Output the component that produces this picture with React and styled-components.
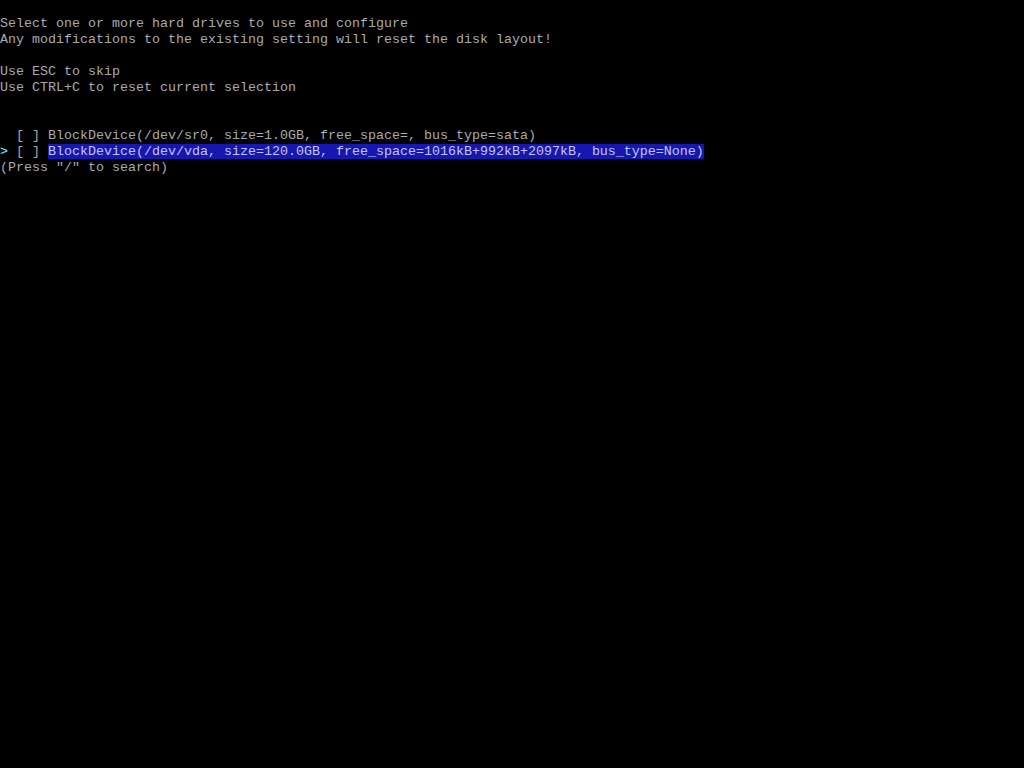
import React from "react";
import styled, { createGlobalStyle } from "styled-components";

const Global = createGlobalStyle`
  html, body { margin: 0; padding: 0; background: #000; }
  #root { width: 1024px; height: 768px; }
`;

const Screen = styled.div`
  width: 1024px;
  height: 768px;
  background: #000;
  color: #aaaaaa;
  font-family: "Liberation Mono", "DejaVu Sans Mono", monospace;
  font-size: 13.333px;
  line-height: 16px;
  overflow: hidden;
  display: flex;
  flex-direction: column;
`;

const Line = styled.div`
  height: 16px;
  white-space: pre;
`;

const Cursor = styled.span`
  color: #55ffff;
`;

const Selected = styled.span`
  background: #1616b0;
  color: #c4c4ee;
`;

const blank = <Line> </Line>;

export default function App() {
  return (
    <Screen>
      <Global />
      <Line> </Line>
      <Line>Select one or more hard drives to use and configure</Line>
      <Line>Any modifications to the existing setting will reset the disk layout!</Line>
      <Line> </Line>
      <Line>Use ESC to skip</Line>
      <Line>Use CTRL+C to reset current selection</Line>
      <Line> </Line>
      <Line> </Line>
      <Line>{"  [ ] BlockDevice(/dev/sr0, size=1.0GB, free_space=, bus_type=sata)"}</Line>
      <Line>
        <Cursor>{">"}</Cursor>
        {" [ ] "}
        <Selected>BlockDevice(/dev/vda, size=120.0GB, free_space=1016kB+992kB+2097kB, bus_type=None)</Selected>
      </Line>
      <Line>(Press "/" to search)</Line>
    </Screen>
  );
}
